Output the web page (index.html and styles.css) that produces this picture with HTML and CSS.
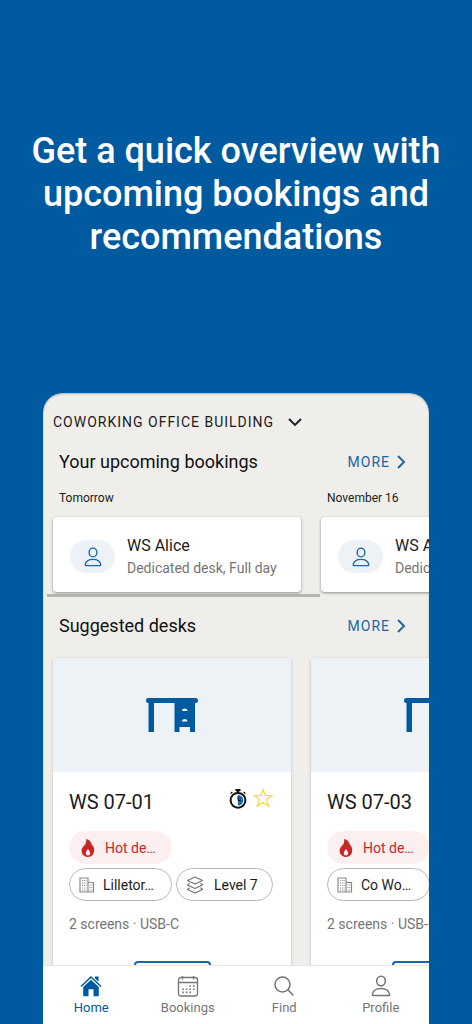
FILE: index.html
```html
<!DOCTYPE html>
<html lang="en">
<head>
<meta charset="utf-8">
<meta name="viewport" content="width=device-width, initial-scale=1">
<title>Coworking bookings</title>
<link rel="stylesheet" href="styles.css">
</head>
<body>
<svg class="sprite" aria-hidden="true">
  <symbol id="chevron" viewBox="0 0 14 14"><path d="M4 1l6 6-6 6" fill="none" stroke="currentColor" stroke-width="1.9"/></symbol>
  <symbol id="person" viewBox="0 0 20 22"><g fill="none" stroke="currentColor" stroke-width="1.5"><ellipse cx="10" cy="6" rx="4.3" ry="4.8"/><path d="M2.300 20.600h15.400c.7 0 1-.5.9-1.100C18 15.900 14.500 13.600 10 13.600S2 15.900 1.400 19.500c-.1.600.2 1.100.9 1.100z"/></g></symbol>
  <symbol id="desk" viewBox="0 0 52 34"><path fill="currentColor" fill-rule="evenodd" d="M2.500 0h47a2.500 2.500 0 0 1 0 5H49v29h-5v-5H33.500v5h-5V5H8v29H2.500V5a2.500 2.500 0 0 1 0-5zM36 13h5.500c0-3.200-5.500-3.200-5.500 0zM36 23.500h5.500c0-3.200-5.500-3.200-5.500 0z"/></symbol>
  <symbol id="flame" viewBox="0 0 14 18"><path fill="currentColor" fill-rule="evenodd" d="M5 0c3.500.8 5.300 2.800 5.700 5.600 1.700 1.400 2.600 3.500 2.500 6C13 15.500 10.500 18 7 18S.800 15.500.6 12C.4 8.800 3 7.300 4.500 4.800 5.300 3.300 5.400 1.500 5 0zM7 10c-1.200 1.800-2.200 2.700-2.200 4.200a2.200 2.200 0 0 0 4.400 0c0-1.500-1-2.400-2.200-4.200z"/></symbol>
  <symbol id="building" viewBox="0 0 16 16"><path d="M1 15V1h8v14zM9 5.500h5.500V15H9z" fill="none" stroke="currentColor" stroke-width="1.200"/><path d="M3 3.500h4.500M3 6h4.500M3 8.500h4.500M3 11h4.500M10.500 8h3M10.500 10.500h3M10.500 13h3M3 13.200h4.500" stroke="currentColor" stroke-dasharray="1 .8" stroke-width="1"/></symbol>
  <symbol id="layers" viewBox="0 0 18 18"><path d="M9 1l7.500 3.500L9 8 1.500 4.500zM3.500 7.300L1.500 9 9 12.500 16.500 9l-2-1.700M3.500 11.800l-2 1.700L9 17l7.500-3.500-2-1.700" fill="none" stroke="currentColor" stroke-width="1.200" stroke-linejoin="round"/></symbol>
  <symbol id="timer" viewBox="0 0 18 20"><path d="M6.500 0h5v2h-1.200v1.800H7.700V2H6.500z" fill="#111"/><path d="M1.600 4.600l1.700-1.600M16.400 4.600l-1.700-1.600" stroke="#111" stroke-width="1.300"/><circle cx="9" cy="11.300" r="7.400" fill="#fff" stroke="#111" stroke-width="2"/><path d="M9 6a5.300 5.300 0 0 1 0 10.600z" fill="#1a66a8"/><path d="M9 7v4.500h2.500" fill="none" stroke="#111" stroke-width="1"/></symbol>
  <symbol id="star" viewBox="0 0 20 20"><path d="M10 1.500l2.200 6.200h6.500l-5.200 4 2 6.500-5.500-4-5.500 4 2-6.500-5.200-4h6.500z" fill="none" stroke="#f4dc45" stroke-width="1.300"/></symbol>
</svg>

<header class="hero">
  <h1 class="hero-title">Get a quick overview with upcoming bookings and recommendations</h1>
</header>

<div class="phone">
  <main class="screen">
    <button class="location" type="button">COWORKING OFFICE BUILDING
      <svg class="icon-chevron down" aria-hidden="true"><use href="#chevron"/></svg>
    </button>

    <section class="section">
      <div class="section-head">
        <h2 class="section-title">Your upcoming bookings</h2>
        <a class="more" href="#bookings">MORE<svg class="icon-chevron" aria-hidden="true"><use href="#chevron"/></svg></a>
      </div>
      <div class="row">
        <article class="booking">
          <h3 class="booking-date">Tomorrow</h3>
          <div class="booking-card">
            <span class="avatar"><svg class="icon-person" aria-hidden="true"><use href="#person"/></svg></span>
            <div><p class="booking-name">WS Alice</p><p class="booking-info">Dedicated desk, Full day</p></div>
          </div>
        </article>
        <article class="booking">
          <h3 class="booking-date">November 16</h3>
          <div class="booking-card">
            <span class="avatar"><svg class="icon-person" aria-hidden="true"><use href="#person"/></svg></span>
            <div><p class="booking-name">WS Alice</p><p class="booking-info">Dedicated desk, Full day</p></div>
          </div>
        </article>
      </div>
      <div class="scrollbar"></div>
    </section>

    <section class="section">
      <div class="section-head suggested">
        <h2 class="section-title">Suggested desks</h2>
        <a class="more" href="#desks">MORE<svg class="icon-chevron" aria-hidden="true"><use href="#chevron"/></svg></a>
      </div>
      <div class="row">
        <article class="desk">
          <div class="desk-image"><svg class="icon-desk" aria-hidden="true"><use href="#desk"/></svg></div>
          <div class="desk-body">
            <div class="desk-head">
              <h3 class="desk-name">WS 07-01</h3>
              <svg class="icon-timer" aria-hidden="true"><use href="#timer"/></svg>
              <button class="star" type="button" aria-label="Favourite"><svg class="icon-star" aria-hidden="true"><use href="#star"/></svg></button>
            </div>
            <div class="chips">
              <span class="chip hot"><svg class="icon-flame" aria-hidden="true"><use href="#flame"/></svg>Hot de…</span>
              <span class="chip place"><svg class="icon-building" aria-hidden="true"><use href="#building"/></svg>Lilletor…</span>
              <span class="chip level"><svg class="icon-layers" aria-hidden="true"><use href="#layers"/></svg>Level 7</span>
            </div>
            <p class="desk-info">2 screens · USB-C</p>
            <button class="book" type="button" aria-label="Book WS 07-01"></button>
          </div>
        </article>
        <article class="desk">
          <div class="desk-image"><svg class="icon-desk" aria-hidden="true"><use href="#desk"/></svg></div>
          <div class="desk-body">
            <div class="desk-head">
              <h3 class="desk-name">WS 07-03</h3>
            </div>
            <div class="chips">
              <span class="chip hot"><svg class="icon-flame" aria-hidden="true"><use href="#flame"/></svg>Hot de…</span>
              <span class="chip place"><svg class="icon-building" aria-hidden="true"><use href="#building"/></svg>Co Wo…</span>
            </div>
            <p class="desk-info">2 screens · USB-C</p>
            <button class="book" type="button" aria-label="Book WS 07-03"></button>
          </div>
        </article>
      </div>
    </section>
  </main>

  <nav class="tabs">
    <a class="tab active" href="#home">
      <svg class="icon-tab" viewBox="0 0 22 22" aria-hidden="true"><path d="M1 11.500L11 2l10 9.500" fill="none" stroke="currentColor" stroke-width="1.600"/><path d="M15 1.500h3.500v5.300L15 3.600zM11 4.700l7.800 7.300v8.500a.8.800 0 0 1-.8.800h-4.500v-7h-5v7H4a.8.800 0 0 1-.8-.8V12z" fill="currentColor"/></svg>
      Home</a>
    <a class="tab" href="#bookings">
      <svg class="icon-tab" viewBox="0 0 22 22" aria-hidden="true"><g fill="none" stroke="currentColor" stroke-width="1.300"><rect x="1.500" y="2.500" width="19" height="18.500" rx="2.500"/><path d="M1.500 7.500h19M5.500 1v3.500M16.500 1v3.500"/><path stroke-width="1.600" stroke-dasharray="1.600 2" d="M12.400 11h5.300M5.200 14.200h12.500M5.200 17.400h9"/></g></svg>
      Bookings</a>
    <a class="tab" href="#find">
      <svg class="icon-tab" viewBox="0 0 22 22" aria-hidden="true"><g fill="none" stroke="currentColor" stroke-width="1.500"><circle cx="9.500" cy="9.500" r="7.500"/><path d="M14.800 14.800l5.700 5.700"/></g></svg>
      Find</a>
    <a class="tab" href="#profile">
      <svg class="icon-tab" aria-hidden="true"><use href="#person"/></svg>
      Profile</a>
  </nav>
</div>
</body>
</html>
```
FILE: styles.css
```css
* { box-sizing: border-box; }

body {
  margin: 0;
  height: 100vh;
  display: flex;
  flex-direction: column;
  background: #005aa0;
  color: #1c1c1c;
  font-family: Roboto, "Liberation Sans", sans-serif;
  overflow: hidden;
}

h1, h2, h3, p { margin: 0; font-weight: 400; }
button { font: inherit; color: inherit; background: none; border: 0; padding: 0; }
a { color: inherit; text-decoration: none; }
svg { display: block; flex: none; }
.sprite { position: absolute; width: 0; height: 0; }

.hero { padding: 130px 24px 134px; }
.hero-title {
  color: #fff;
  font-size: 36px;
  font-weight: 500;
  line-height: 43px;
  text-align: center;
}

.phone {
  flex: 1;
  min-height: 0;
  margin: 0 43px;
  display: flex;
  flex-direction: column;
  background: #efeeea;
  border-radius: 20px 20px 0 0;
  overflow: hidden;
  box-shadow: inset 0 1px 2px rgba(0, 0, 0, .25);
}
.screen { flex: 1; min-height: 0; overflow: hidden; }

.location {
  display: flex;
  align-items: center;
  gap: 14px;
  padding: 18px 10px 0;
  font-size: 14px;
  line-height: 22px;
  letter-spacing: 1px;
}
.icon-chevron { width: 14px; height: 14px; }
.down { transform: rotate(90deg); }

.section-head {
  display: flex;
  align-items: center;
  justify-content: space-between;
  padding: 16px 21px 0 16px;
  line-height: 26px;
}
.section-title { font-size: 18px; color: #111; }
.more {
  display: flex;
  align-items: center;
  gap: 4px;
  font-size: 14px;
  letter-spacing: 1px;
  color: #1a66a8;
}
.row { display: flex; gap: 20px; padding: 0 10px; }

.booking { flex: none; width: 248px; }
.booking-date { padding: 14px 6px 10px; font-size: 12px; line-height: 18px; }
.booking-card {
  display: flex;
  align-items: center;
  gap: 12px;
  height: 75px;
  padding: 0 17px;
  background: #fff;
  border-radius: 4px;
  box-shadow: 0 1px 3px rgba(0, 0, 0, .4);
  white-space: nowrap;
}
.avatar {
  display: flex;
  align-items: center;
  justify-content: center;
  width: 45px;
  height: 33px;
  margin-top: 4px;
  border-radius: 17px;
  background: #edf2f7;
  color: #1a66a8;
}
.icon-person { width: 18px; height: 20px; }
.booking-name { font-size: 16px; line-height: 22px; margin-top: 5px; }
.booking-info { font-size: 14px; line-height: 22px; color: #757575; }
.scrollbar { width: 273px; height: 3px; margin: 2px 4px 0; background: #b7b6b2; }

.suggested { padding-bottom: 19px; }
.desk {
  flex: none;
  width: 238px;
  background: #fff;
  border-radius: 3px;
  overflow: hidden;
  box-shadow: 0 1px 3px rgba(0, 0, 0, .25);
}
.desk-image {
  display: flex;
  align-items: center;
  justify-content: center;
  height: 114px;
  background: #edf2f7;
  color: #005aa0;
}
.icon-desk { width: 52px; height: 34px; }
.desk-body { padding: 16px 16px 20px; }
.desk-head { display: flex; align-items: flex-start; gap: 6px; height: 28px; margin-bottom: 15px; padding-right: 2px; }
.desk-name { flex: 1; font-size: 20px; line-height: 28px; }
.icon-timer { width: 18px; height: 20px; margin-top: 1px; }
.icon-star { width: 20px; height: 20px; }
.chips { display: flex; flex-wrap: wrap; gap: 4px; }
.chip {
  display: flex;
  align-items: center;
  height: 33px;
  border: 1px solid #b8b8b8;
  border-radius: 17px;
  padding: 0 9px;
  gap: 10px;
  font-size: 14px;
  white-space: nowrap;
}
.hot { width: 103px; margin-right: 60px; background: #fcefef; border-color: #fcefef; color: #c62828; padding-left: 11px; }
.place { width: 103px; gap: 8px; }
.level { width: 97px; }
.icon-flame { width: 14px; height: 18px; }
.icon-building { width: 16px; height: 16px; color: #8a8a8a; }
.icon-layers { width: 18px; height: 18px; color: #757575; }
.desk-info { margin-top: 12px; font-size: 14px; line-height: 22px; color: #757575; }
.book {
  display: block;
  width: 77px;
  height: 36px;
  margin: 26px auto 0;
  border: 2px solid #1a66a8;
  border-radius: 4px;
}

.tabs {
  display: flex;
  height: 59px;
  background: #fff;
  border-top: 1px solid #e6e6e6;
}
.tab {
  flex: 1;
  display: flex;
  flex-direction: column;
  align-items: center;
  gap: 3px;
  padding-top: 9px;
  font-size: 13px;
  line-height: 16px;
  color: #757575;
}
.active { color: #005aa0; }
.icon-tab { width: 22px; height: 22px; }
```
